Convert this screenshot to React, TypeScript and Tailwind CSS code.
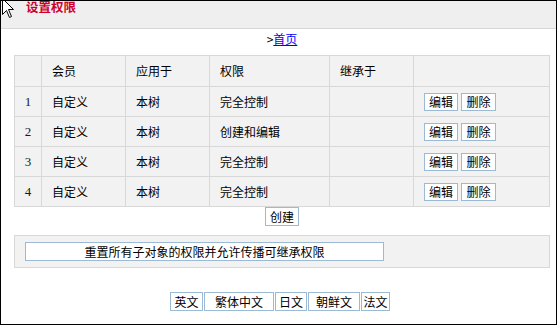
import React from 'react';

const rows = [
  { no: 1, member: '自定义', scope: '本树', perm: '完全控制' },
  { no: 2, member: '自定义', scope: '本树', perm: '创建和编辑' },
  { no: 3, member: '自定义', scope: '本树', perm: '完全控制' },
  { no: 4, member: '自定义', scope: '本树', perm: '完全控制' },
];

const langs = [
  { label: '英文', w: 'w-[33px]' },
  { label: '繁体中文', w: 'w-[70px]' },
  { label: '日文', w: 'w-[32px]' },
  { label: '朝鲜文', w: 'w-[52px]' },
  { label: '法文', w: 'w-[29px]' },
];

const cell = 'border-r border-b border-[#d8d8d8] pl-[10px] flex items-center';
const btn =
  'border border-[#9cbad3] bg-white text-[12px] leading-none text-black flex items-center justify-center';

function Cursor() {
  return (
    <svg
      className="absolute left-[1px] top-[-3px]"
      width="13"
      height="21"
      viewBox="0 0 13 21"
    >
      <path
        d="M0.5 0.5 L0.5 16.5 L4.5 12.5 L7.5 19.5 L9.5 18.5 L6.5 11.5 L11.5 11.5 Z"
        fill="#fff"
        stroke="#000"
        strokeWidth="1"
      />
    </svg>
  );
}

export default function App() {
  return (
    <div
      className="relative w-[557px] h-[325px] bg-white border border-black overflow-hidden text-[12px] text-black"
      style={{ fontFamily: '"Noto Sans CJK SC", "Liberation Sans", sans-serif' }}
    >
      {/* header */}
      <div className="h-[28px] bg-[#efefef] border-b border-[#d8d8d8] overflow-hidden">
        <div className="ml-[25px] -mt-[1px] text-[12.5px] leading-[14px] font-bold text-[#d0002c]">
          设置权限
        </div>
      </div>
      <Cursor />

      <div className="h-[26px] pt-[2px] pl-[7px] text-center leading-[15px]">
        &gt;<a href="#" className="text-[#0000ff] underline">首页</a>
      </div>

      <div className="ml-[13px] w-[536px]">
        {/* permissions table */}
        <div className="grid grid-cols-[27px_84px_84px_120px_84px_136px] border-l border-t border-[#d8d8d8] bg-[#f2f2f2]">
          <div className={`${cell} h-[31px]`} />
          <div className={`${cell} h-[31px]`}>会员</div>
          <div className={`${cell} h-[31px]`}>应用于</div>
          <div className={`${cell} h-[31px]`}>权限</div>
          <div className={`${cell} h-[31px]`}>继承于</div>
          <div className={`${cell} h-[31px]`} />
          {rows.map((r) => (
            <React.Fragment key={r.no}>
              <div
                className="border-r border-b border-[#d8d8d8] h-[30px] flex items-center justify-center text-[13px] text-[#1a1a1a]"
                style={{ fontFamily: '"Liberation Serif", serif' }}
              >
                {r.no}
              </div>
              <div className={`${cell} h-[30px]`}>{r.member}</div>
              <div className={`${cell} h-[30px]`}>{r.scope}</div>
              <div className={`${cell} h-[30px]`}>{r.perm}</div>
              <div className={`${cell} h-[30px]`} />
              <div className={`${cell} h-[30px] gap-[3px]`}>
                <button className={`${btn} w-[34px] h-[18px]`}>编辑</button>
                <button className={`${btn} w-[35px] h-[18px]`}>删除</button>
              </div>
            </React.Fragment>
          ))}
        </div>

        <div className="flex justify-center">
          <button className={`${btn} w-[34px] h-[19px]`}>创建</button>
        </div>

        {/* reset panel */}
        <div className="mt-[9px] h-[33px] border border-[#d8d8d8] bg-[#f2f2f2] pt-[6px] pl-[10px]">
          <button className={`${btn} w-[359px] h-[19px]`}>
            重置所有子对象的权限并允许传播可继承权限
          </button>
        </div>
      </div>

      {/* languages */}
      <div className="mt-[24px] pl-[169px] flex gap-[1px]">
        {langs.map((l) => (
          <button key={l.label} className={`${btn} ${l.w} h-[19px]`}>
            {l.label}
          </button>
        ))}
      </div>
    </div>
  );
}
